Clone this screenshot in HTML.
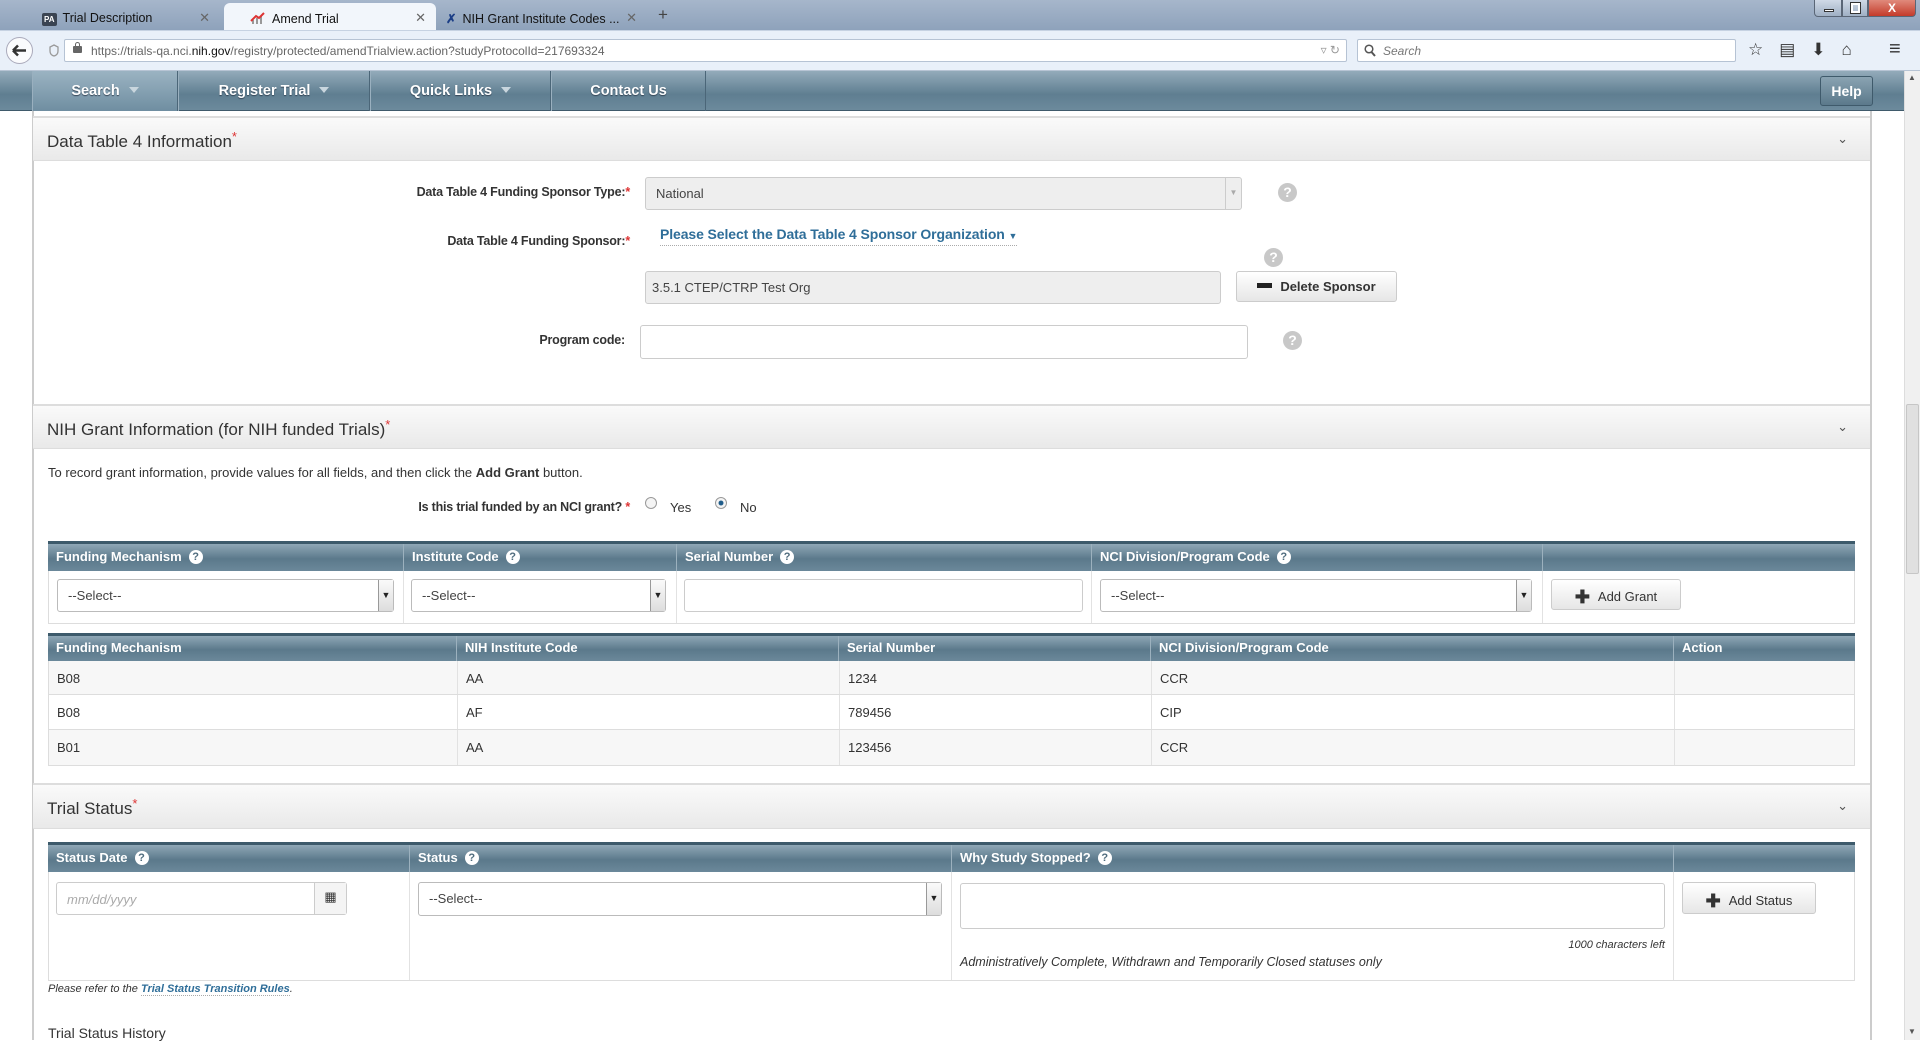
<!DOCTYPE html>
<html><head><meta charset="utf-8">
<style>
*{box-sizing:border-box;margin:0;padding:0}
body{width:1920px;height:1040px;overflow:hidden;background:#fff;font-family:"Liberation Sans",sans-serif;position:relative;color:#333}
.a{position:absolute}
.tabbar{left:0;top:0;width:1920px;height:30px;background:linear-gradient(#a6b6cb,#8ea2bb)}
.tab{top:3px;height:27px;font-size:12.5px;color:#111;padding:8px 0 0 50px;border-radius:6px 6px 0 0}
.tab .x{position:absolute;right:10px;top:7px;color:#666;font-size:13px}
.toolbar{left:0;top:30px;width:1920px;height:41px;background:#e9f0f9;border-top:1px solid #c6d2e2;border-bottom:1px solid #b7c4d4}
.url{left:64px;top:39px;width:1283px;height:23px;background:#fff;border:1px solid #b6c3d4;border-radius:2px;font-size:12px;color:#666;padding:4px 0 0 26px}
.srch{left:1357px;top:39px;width:379px;height:23px;background:#fff;border:1px solid #b6c3d4;border-radius:2px;font-size:12px;color:#777;font-style:italic;padding:4px 0 0 25px}
.nav{left:0;top:71px;width:1904px;height:40px;background:linear-gradient(#93abba,#5f7e91 60%,#6c8a9c);border-bottom:1px solid #3f5a6b}
.nv{top:71px;height:40px;color:#fff;font-size:14.5px;font-weight:bold;text-align:center;padding-top:12px;border-right:1px solid #4b6678;border-left:1px solid #9ab0bf;text-shadow:0 1px 1px #345}
.car{display:inline-block;width:0;height:0;border-left:5px solid transparent;border-right:5px solid transparent;border-top:6px solid #c9d6de;margin-left:9px;vertical-align:2px}
.scroll{left:1904px;top:71px;width:16px;height:969px;background:#f0f0f0;border-left:1px solid #ddd}
.panel{left:32px;top:111px;width:1840px;height:929px;border-left:2px solid #ccc;border-right:2px solid #ccc;background:#fff}
.sh{left:33px;width:1837px;background:linear-gradient(#fafafa,#e9e9e9);border-top:2px solid #ddd;border-bottom:1px solid #ddd;font-size:17px;color:#333;padding-left:14px}
.sh .st{color:#d33;font-size:13px;vertical-align:6px}
.chev{right:22px;color:#555;font-size:13px}
.lbl{font-size:12.5px;font-weight:bold;color:#333;text-align:right;letter-spacing:-0.2px}
.lbl b{color:#d33}
.inp{border:1px solid #ccc;border-radius:3px;background:#fff;font-size:13px;color:#444;padding-left:10px}
.help{width:19px;height:19px;border-radius:50%;background:#c8c8c8;color:#fff;font-weight:bold;font-size:14px;text-align:center;line-height:19px}
.btn{border:1px solid #ccc;border-radius:3px;background:linear-gradient(#fff,#e6e6e6);font-size:13px;color:#333;text-align:center;font-weight:bold}
.th{background:linear-gradient(#8fa7b6,#5b798b 55%,#6b889a);border-top:3px solid #3d5a6b;color:#fff;font-weight:bold;font-size:13px}
.th div{position:absolute;top:0;height:100%;border-left:1px solid #9cb1be;padding:5px 0 0 8px}
.qi{display:inline-block;width:14px;height:14px;border-radius:50%;background:#fff;color:#4e6b7d;font-size:11px;text-align:center;line-height:14px;margin-left:7px;vertical-align:1px}
.sel{border:1px solid #bbb;border-radius:3px;background:#fff;font-size:13px;color:#444;padding:8px 0 0 10px}
.sel i{position:absolute;right:0;top:0;width:15px;height:100%;background:linear-gradient(#fafafa,#ddd);border-left:1px solid #999;font-style:normal;font-size:9px;text-align:center;padding-top:10px;color:#222}
.row{left:48px;width:1807px;border-bottom:1px solid #ddd;font-size:13px;color:#333}
.row div{position:absolute;top:0;height:100%;padding:10px 0 0 8px;border-left:1px solid #e2e2e2}
.wb{top:0;height:17px;border:1px solid #5a6676;border-top:none;background:linear-gradient(#cfd9e6,#9fb0c4)}
</style></head><body>
<div class="a tabbar"></div>
<div class="a tab" style="left:18px;width:202px;padding-left:24px"><span style="display:inline-block;background:#3a4452;color:#fff;font-size:8px;font-weight:bold;padding:2px 2px;border-radius:2px;margin-right:6px">PA</span>Trial Description<span class="x">✕</span></div>
<div class="a tab" style="left:224px;width:212px;background:#f2f6fb;padding-left:26px"><svg width="16" height="14" style="vertical-align:-2px;margin-right:6px"><rect x="2" y="9" width="2" height="4" fill="#999"/><rect x="6" y="7" width="2" height="6" fill="#999"/><rect x="10" y="5" width="2" height="8" fill="#999"/><path d="M1 10 L6 5 L9 7 L14 2" stroke="#d33" stroke-width="2" fill="none"/></svg>Amend Trial<span class="x">✕</span></div>
<div class="a tab" style="left:440px;width:207px;padding-left:6px"><span style="color:#1b3e86;font-weight:bold;margin-right:6px">✗</span>NIH Grant Institute Codes ...<span class="x">✕</span></div>
<div class="a" style="left:658px;top:5px;font-size:17px;color:#444">+</div>
<div class="a wb" style="left:1814px;width:28px;border-radius:0 0 0 4px"><span class="a" style="left:9px;top:9px;width:10px;height:3px;background:#fff;border:1px solid #333"></span></div>
<div class="a wb" style="left:1842px;width:26px"><span class="a" style="left:8px;top:3px;width:9px;height:10px;border:2px solid #fff;outline:1px solid #333"></span></div>
<div class="a wb" style="left:1868px;width:48px;background:linear-gradient(#e08a7c,#c43b2a);border-radius:0 0 4px 0;color:#fff;font-weight:bold;font-size:12px;text-align:center;line-height:16px">X</div>
<div class="a toolbar"></div>
<div class="a" style="left:6px;top:37px;width:27px;height:27px;border-radius:50%;border:1px solid #aab;background:#fafbfd"><svg width="25" height="25"><path d="M6 12.5 H19 M6 12.5 L11 7.5 M6 12.5 L11 17.5" stroke="#333" stroke-width="2.5" fill="none"/></svg></div>
<div class="a url"><svg class="a" style="left:-16px;top:4px" width="10" height="13"><path d="M5 1 L9 3 V7 Q9 11 5 12 Q1 11 1 7 V3 Z" stroke="#999" stroke-width="1.3" fill="none"/></svg><span class="a" style="left:8px;top:6px;width:9px;height:7px;background:#666;border-radius:1px"></span><span class="a" style="left:10px;top:2px;width:5px;height:6px;border:1.5px solid #666;border-bottom:none;border-radius:3px 3px 0 0"></span>https://trials-qa.nci.<span style="color:#111">nih.gov</span>/registry/protected/amendTrialview.action?studyProtocolId=217693324<span class="a" style="right:6px;top:3px;color:#999">▿ ↻</span></div>
<div class="a srch"><svg class="a" style="left:6px;top:4px" width="12" height="13"><circle cx="5" cy="5" r="3.8" stroke="#555" stroke-width="1.5" fill="none"/><path d="M7.5 8 L11 12" stroke="#555" stroke-width="2"/></svg>Search</div>
<div class="a" style="left:1748px;top:40px;font-size:17px;color:#333;letter-spacing:16px">☆▤⬇⌂</div>
<div class="a" style="left:1889px;top:38px;font-size:20px;color:#333">≡</div>
<div class="a nav"></div>
<div class="a nv" style="left:32px;width:146px;background:linear-gradient(#9bb3c2,#6f8ea1)">Search<span class="car"></span></div>
<div class="a nv" style="left:178px;width:192px">Register Trial<span class="car"></span></div>
<div class="a nv" style="left:370px;width:181px">Quick Links<span class="car"></span></div>
<div class="a nv" style="left:551px;width:155px">Contact Us</div>
<div class="a" style="left:1820px;top:76px;width:53px;height:30px;border:1px solid #3f5a6b;border-radius:3px;background:linear-gradient(#8aa3b2,#5b798b);color:#fff;font-weight:bold;font-size:14px;text-align:center;padding-top:6px">Help</div>
<div class="a scroll"><div class="a" style="left:1px;top:333px;width:13px;height:170px;background:#e0e0e0;border:1px solid #c6c6c6;border-radius:2px"></div><span class="a" style="left:3px;top:2px;font-size:8px;color:#555">▲</span><span class="a" style="left:3px;top:956px;font-size:8px;color:#555">▼</span></div>
<div class="a panel"></div>

<div class="a sh" style="top:116px;height:45px;padding-top:11px">Data Table 4 Information<span class="st">*</span><span class="a chev" style="top:13px">⌄</span></div>
<div class="a lbl" style="left:300px;width:330px;top:185px">Data Table 4 Funding Sponsor Type:<b>*</b></div>
<div class="a inp" style="left:645px;top:177px;width:597px;height:33px;background:#eee;padding-top:8px">National<span class="a" style="right:0;top:0;width:16px;height:31px;border-left:1px solid #ccc;font-size:8px;color:#aaa;text-align:center;padding-top:10px">▼</span></div>
<div class="a help" style="left:1278px;top:183px">?</div>
<div class="a lbl" style="left:300px;width:330px;top:234px">Data Table 4 Funding Sponsor:<b>*</b></div>
<div class="a" style="left:660px;top:226px;font-size:14px;font-weight:bold;color:#2f6e99;border-bottom:1px dotted #aaa;padding-bottom:3px;letter-spacing:-0.1px">Please Select the Data Table 4 Sponsor Organization <span style="font-size:9px">▼</span></div>
<div class="a help" style="left:1264px;top:248px">?</div>
<div class="a inp" style="left:645px;top:271px;width:576px;height:33px;background:#eee;padding:8px 0 0 6px">3.5.1 CTEP/CTRP Test Org</div>
<div class="a btn" style="left:1236px;top:271px;width:161px;height:31px;padding-top:7px"><span style="display:inline-block;width:15px;height:5px;background:#222;vertical-align:3px;margin-right:8px"></span>Delete Sponsor</div>
<div class="a lbl" style="left:300px;width:325px;top:333px">Program code:</div>
<div class="a inp" style="left:640px;top:325px;width:608px;height:34px"></div>
<div class="a help" style="left:1283px;top:331px">?</div>

<div class="a sh" style="top:404px;height:45px;padding-top:11px">NIH Grant Information (for NIH funded Trials)<span class="st">*</span><span class="a chev" style="top:13px">⌄</span></div>
<div class="a" style="left:48px;top:465px;font-size:13px">To record grant information, provide values for all fields, and then click the <b>Add Grant</b> button.</div>
<div class="a lbl" style="left:300px;width:330px;top:500px">Is this trial funded by an NCI grant?<b> *</b></div>
<div class="a" style="left:645px;top:497px;width:12px;height:12px;border-radius:50%;border:1px solid #999;background:#f4f4f4"></div>
<div class="a" style="left:670px;top:500px;font-size:13px">Yes</div>
<div class="a" style="left:715px;top:497px;width:12px;height:12px;border-radius:50%;border:1px solid #999;background:radial-gradient(#1f5c8a 30%,#f4f4f4 40%)"></div>
<div class="a" style="left:740px;top:500px;font-size:13px">No</div>

<div class="a th" style="left:48px;top:541px;width:1807px;height:30px">
<div style="left:0;border:none">Funding Mechanism<span class="qi">?</span></div>
<div style="left:355px">Institute Code<span class="qi">?</span></div>
<div style="left:628px">Serial Number<span class="qi">?</span></div>
<div style="left:1043px">NCI Division/Program Code<span class="qi">?</span></div>
<div style="left:1494px"></div></div>
<div class="a" style="left:48px;top:571px;width:1807px;height:53px;border:1px solid #ddd;border-top:none"></div>
<div class="a" style="left:403px;top:571px;width:1px;height:52px;background:#e2e2e2"></div>
<div class="a" style="left:676px;top:571px;width:1px;height:52px;background:#e2e2e2"></div>
<div class="a" style="left:1091px;top:571px;width:1px;height:52px;background:#e2e2e2"></div>
<div class="a" style="left:1542px;top:571px;width:1px;height:52px;background:#e2e2e2"></div>
<div class="a sel" style="left:57px;top:579px;width:337px;height:33px">--Select--<i>▼</i></div>
<div class="a sel" style="left:411px;top:579px;width:255px;height:33px">--Select--<i>▼</i></div>
<div class="a inp" style="left:684px;top:579px;width:399px;height:33px"></div>
<div class="a sel" style="left:1100px;top:579px;width:432px;height:33px">--Select--<i>▼</i></div>
<div class="a btn" style="left:1551px;top:579px;width:130px;height:31px;padding-top:7px;font-weight:normal"><b style="font-size:18px;vertical-align:-2px;margin-right:8px">✚</b>Add Grant</div>

<div class="a th" style="left:48px;top:633px;width:1807px;height:28px">
<div style="left:0;border:none;padding-top:4px">Funding Mechanism</div>
<div style="left:408px;padding-top:4px">NIH Institute Code</div>
<div style="left:790px;padding-top:4px">Serial Number</div>
<div style="left:1102px;padding-top:4px">NCI Division/Program Code</div>
<div style="left:1625px;padding-top:4px">Action</div></div>
<div class="a row" style="top:661px;height:34px;background:#f7f7f7;border-left:1px solid #ddd;border-right:1px solid #ddd"><div style="left:0;border:none">B08</div><div style="left:408px">AA</div><div style="left:790px">1234</div><div style="left:1102px">CCR</div><div style="left:1625px"></div></div>
<div class="a row" style="top:695px;height:35px;background:#fff;border-left:1px solid #ddd;border-right:1px solid #ddd"><div style="left:0;border:none">B08</div><div style="left:408px">AF</div><div style="left:790px">789456</div><div style="left:1102px">CIP</div><div style="left:1625px"></div></div>
<div class="a row" style="top:730px;height:36px;background:#f7f7f7;border-left:1px solid #ddd;border-right:1px solid #ddd"><div style="left:0;border:none">B01</div><div style="left:408px">AA</div><div style="left:790px">123456</div><div style="left:1102px">CCR</div><div style="left:1625px"></div></div>

<div class="a sh" style="top:783px;height:46px;padding-top:11px">Trial Status<span class="st">*</span><span class="a chev" style="top:13px">⌄</span></div>
<div class="a th" style="left:48px;top:842px;width:1807px;height:30px">
<div style="left:0;border:none">Status Date<span class="qi">?</span></div>
<div style="left:361px">Status<span class="qi">?</span></div>
<div style="left:903px">Why Study Stopped?<span class="qi">?</span></div>
<div style="left:1625px"></div></div>
<div class="a" style="left:48px;top:872px;width:1807px;height:109px;border:1px solid #ddd;border-top:none"></div>
<div class="a" style="left:409px;top:872px;width:1px;height:108px;background:#e2e2e2"></div>
<div class="a" style="left:951px;top:872px;width:1px;height:108px;background:#e2e2e2"></div>
<div class="a" style="left:1673px;top:872px;width:1px;height:108px;background:#e2e2e2"></div>
<div class="a inp" style="left:56px;top:882px;width:291px;height:33px;padding-top:9px;color:#aaa;font-style:italic">mm/dd/yyyy<span class="a" style="right:0;top:0;width:32px;height:31px;border-left:1px solid #ccc;background:#f4f4f4;font-style:normal;color:#333;text-align:center;padding-top:6px">▦</span></div>
<div class="a sel" style="left:418px;top:882px;width:524px;height:34px">--Select--<i>▼</i></div>
<div class="a inp" style="left:960px;top:883px;width:705px;height:46px"></div>
<div class="a btn" style="left:1682px;top:882px;width:134px;height:32px;padding-top:8px;font-weight:normal"><b style="font-size:18px;vertical-align:-2px;margin-right:8px">✚</b>Add Status</div>
<div class="a" style="left:1500px;width:165px;text-align:right;top:939px;font-size:11px;font-style:italic">1000 characters left</div>
<div class="a" style="left:960px;top:955px;font-size:12.5px;font-style:italic">Administratively Complete, Withdrawn and Temporarily Closed statuses only</div>
<div class="a" style="left:48px;top:983px;font-size:11px;font-style:italic">Please refer to the <b style="color:#2f6e99;border-bottom:1px dotted #aaa">Trial Status Transition Rules</b>.</div>
<div class="a" style="left:48px;top:1025px;font-size:14px">Trial Status History</div>
</body></html>
